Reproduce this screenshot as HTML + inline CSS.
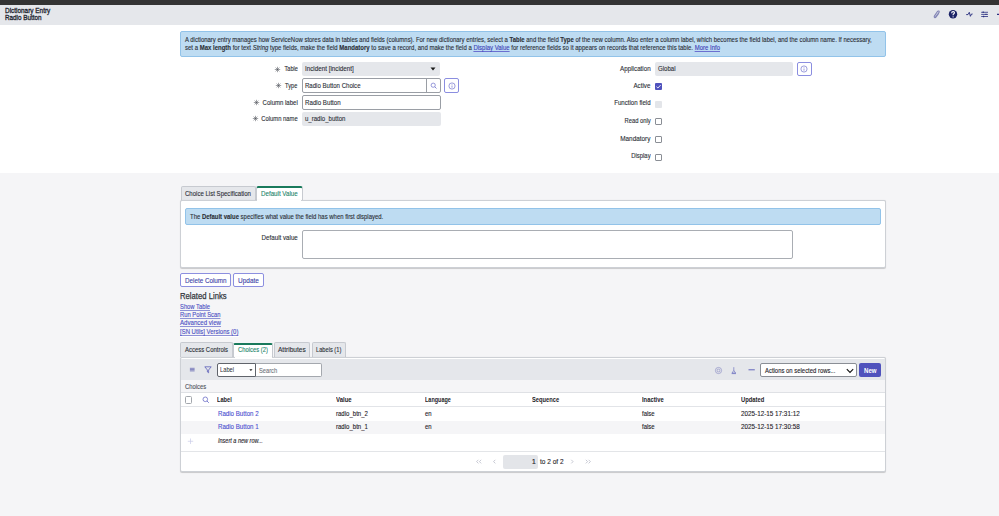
<!DOCTYPE html>
<html><head><meta charset="utf-8"><style>
html,body{margin:0;padding:0;width:999px;height:516px;overflow:hidden;background:#fff;position:relative}
body{font-family:"Liberation Sans",sans-serif}
.t{position:absolute;white-space:nowrap;line-height:1;-webkit-text-stroke:0.12px currentColor}
.r{position:absolute}
.lk{color:#3d41b8;text-decoration-thickness:0.6px;text-decoration-color:#6b6fd0}
b{font-weight:bold}
</style></head><body>
<div class="r" style="left:0px;top:0px;width:999px;height:5px;background:#343434"></div>
<div class="r" style="left:0px;top:5px;width:999px;height:20px;background:#e5e7eb"></div>
<div class="r" style="left:0px;top:173px;width:999px;height:343px;background:#f5f5f7"></div>
<div class="t " id="t0" style="left:4.50px;top:6.67px;font-size:7.0px;color:#1e2530;-webkit-text-stroke:0.3px #1e2530;transform:scaleX(0.9169);transform-origin:left center;">Dictionary Entry</div>
<div class="t " id="t1" style="left:4.50px;top:13.67px;font-size:7.0px;color:#1e2530;-webkit-text-stroke:0.3px #1e2530;transform:scaleX(0.9041);transform-origin:left center;">Radio Button</div>
<svg class="r" style="left:930px;top:8px" width="70" height="14" viewBox="0 0 70 14">
 <path d="M5.3 9.4 L8.9 4.7 Q9.6 3.6 8.8 3.1 Q8 2.7 7.3 3.7 L4.5 7.9 Q3.8 9.1 4.6 9.6 Q5.4 10 6.1 9 L8.5 5.7" fill="none" stroke="#8386b6" stroke-width="1.15" stroke-linecap="round"/>
 <circle cx="23" cy="6.3" r="4.2" fill="#1b2367"/>
 <path d="M21.6 5.2 Q21.7 3.6 23.1 3.6 Q24.5 3.7 24.4 4.9 Q24.3 5.7 23.2 6.3 L23.1 7.2" fill="none" stroke="#fff" stroke-width="1.1"/>
 <circle cx="23.1" cy="8.8" r="0.65" fill="#fff"/>
 <path d="M36.2 6.6 L38 6.6 L39.3 4.3 L40.4 8.3 L41.5 6 L42.6 6" fill="none" stroke="#2a3080" stroke-width="0.95" stroke-linejoin="round"/>
 <path d="M51.2 4.3 H58 M51.2 6.4 H58 M51.2 8.5 H58" stroke="#2a3080" stroke-width="0.8"/>
 <path d="M53.2 3.6 V5 M56 5.7 V7.1 M53.6 7.8 V9.2" stroke="#2a3080" stroke-width="1.1"/>
 <path d="M67 6.3 H70" stroke="#2a3080" stroke-width="1.2"/>
</svg>
<div class="r" style="left:180px;top:31px;width:706px;height:25.6px;background:#bedcf2;border:1px solid #92c3e9;border-radius:2px;box-sizing:border-box"></div>
<div class="t " id="t2" style="left:185.00px;top:35.57px;font-size:7.0px;color:#2b2f36;transform:scaleX(0.8502);transform-origin:left center;">A dictionary entry manages how ServiceNow stores data in tables and fields (columns). For new dictionary entries, select a <b>Table</b> and the field <b>Type</b> of the new column. Also enter a column label, which becomes the field label, and the column name. If necessary,</div>
<div class="t " id="t3" style="left:185.00px;top:44.07px;font-size:7.0px;color:#2b2f36;transform:scaleX(0.8568);transform-origin:left center;">set a <b>Max length</b> for text <i>String</i> type fields, make the field <b>Mandatory</b> to save a record, and make the field a <u class="lk">Display Value</u> for reference fields so it appears on records that reference this table. <u class="lk">More Info</u></div>
<div class="t " id="t4" style="right:701.40px;top:65.45px;font-size:7.5px;color:#2b2f36;transform:scaleX(0.7470);transform-origin:right center;">Table</div>
<svg class="r" style="left:274.20px;top:66.00px" width="7" height="7" viewBox="0 0 7 7"><path d="M3.5 0.8 V6.2 M0.8 3.5 H6.2 M1.6 1.6 L5.4 5.4 M5.4 1.6 L1.6 5.4" stroke="#50545c" stroke-width="0.55"/></svg>
<div class="t " id="t5" style="right:701.40px;top:81.65px;font-size:7.5px;color:#2b2f36;transform:scaleX(0.7500);transform-origin:right center;">Type</div>
<svg class="r" style="left:275.20px;top:82.20px" width="7" height="7" viewBox="0 0 7 7"><path d="M3.5 0.8 V6.2 M0.8 3.5 H6.2 M1.6 1.6 L5.4 5.4 M5.4 1.6 L1.6 5.4" stroke="#50545c" stroke-width="0.55"/></svg>
<div class="t " id="t6" style="right:701.40px;top:98.55px;font-size:7.5px;color:#2b2f36;transform:scaleX(0.8040);transform-origin:right center;">Column label</div>
<svg class="r" style="left:253.40px;top:99.10px" width="7" height="7" viewBox="0 0 7 7"><path d="M3.5 0.8 V6.2 M0.8 3.5 H6.2 M1.6 1.6 L5.4 5.4 M5.4 1.6 L1.6 5.4" stroke="#50545c" stroke-width="0.55"/></svg>
<div class="t " id="t7" style="right:701.40px;top:114.85px;font-size:7.5px;color:#2b2f36;transform:scaleX(0.7794);transform-origin:right center;">Column name</div>
<svg class="r" style="left:251.70px;top:115.40px" width="7" height="7" viewBox="0 0 7 7"><path d="M3.5 0.8 V6.2 M0.8 3.5 H6.2 M1.6 1.6 L5.4 5.4 M5.4 1.6 L1.6 5.4" stroke="#50545c" stroke-width="0.55"/></svg>
<div class="r" style="left:302px;top:62px;width:138px;height:14px;background:#e5e7eb;border-radius:2px"></div>
<div class="t " id="t8" style="left:305.30px;top:64.95px;font-size:7.5px;color:#2b2f36;transform:scaleX(0.8343);transform-origin:left center;">Incident [incident]</div>
<svg class="r" style="left:430px;top:67px" width="6" height="4"><path d="M0.5 0.5 L5.5 0.5 L3 3.5Z" fill="#1a1a1a"/></svg>
<div class="r" style="left:302px;top:78px;width:139px;height:14.599999999999994px;background:#fff;border:1px solid #9a9ea5;border-radius:2px;box-sizing:border-box"></div>
<div class="r" style="left:426px;top:78px;width:1px;height:14.599999999999994px;background:#9a9ea5"></div>
<div class="t " id="t9" style="left:305.30px;top:81.75px;font-size:7.5px;color:#2b2f36;transform:scaleX(0.8067);transform-origin:left center;">Radio Button Choice</div>
<svg class="r" style="left:429.5px;top:82px" width="8" height="8" viewBox="0 0 8 8"><circle cx="3.2" cy="3.2" r="2.1" fill="none" stroke="#7376cc" stroke-width="0.75"/><path d="M4.8 4.8 L6.5 6.5" stroke="#7376cc" stroke-width="0.85"/></svg>
<div class="r" style="left:444.4px;top:78.3px;width:14.200000000000045px;height:14.299999999999997px;background:#fff;border:1px solid #8b8ee0;border-radius:2px;box-sizing:border-box"></div>
<svg class="r" style="left:447.5px;top:81.5px" width="8" height="8" viewBox="0 0 8 8"><circle cx="4" cy="4" r="3.1" fill="none" stroke="#5a5dc4" stroke-width="0.6"/><path d="M4 3.5 V5.7" stroke="#5a5dc4" stroke-width="0.6"/><circle cx="4" cy="2.4" r="0.38" fill="#5a5dc4"/></svg>
<div class="r" style="left:302px;top:95.2px;width:139px;height:14.399999999999991px;background:#fff;border:1px solid #9a9ea5;border-radius:2px;box-sizing:border-box"></div>
<div class="t " id="t10" style="left:305.30px;top:98.55px;font-size:7.5px;color:#2b2f36;transform:scaleX(0.8231);transform-origin:left center;">Radio Button</div>
<div class="r" style="left:302px;top:112.2px;width:138.5px;height:13.599999999999994px;background:#e5e7eb;border-radius:2px"></div>
<div class="t " id="t11" style="left:305.30px;top:115.15px;font-size:7.5px;color:#2b2f36;transform:scaleX(0.8072);transform-origin:left center;">u_radio_button</div>
<div class="r" style="left:655px;top:62px;width:138px;height:14px;background:#e5e7eb;border-radius:2px"></div>
<div class="t " id="t12" style="left:658.20px;top:64.95px;font-size:7.5px;color:#2b2f36;transform:scaleX(0.8069);transform-origin:left center;">Global</div>
<div class="r" style="left:797px;top:62px;width:14.600000000000023px;height:14px;background:#fff;border:1px solid #8b8ee0;border-radius:2px;box-sizing:border-box"></div>
<svg class="r" style="left:800.3px;top:65px" width="8" height="8" viewBox="0 0 8 8"><circle cx="4" cy="4" r="3.1" fill="none" stroke="#5a5dc4" stroke-width="0.6"/><path d="M4 3.5 V5.7" stroke="#5a5dc4" stroke-width="0.6"/><circle cx="4" cy="2.4" r="0.38" fill="#5a5dc4"/></svg>
<div class="t " id="t13" style="right:348.60px;top:64.95px;font-size:7.5px;color:#2b2f36;transform:scaleX(0.8337);transform-origin:right center;">Application</div>
<div class="t " id="t14" style="right:348.60px;top:81.65px;font-size:7.5px;color:#2b2f36;transform:scaleX(0.8318);transform-origin:right center;">Active</div>
<div class="t " id="t15" style="right:348.60px;top:99.25px;font-size:7.5px;color:#2b2f36;transform:scaleX(0.8160);transform-origin:right center;">Function field</div>
<div class="t " id="t16" style="right:348.60px;top:117.05px;font-size:7.5px;color:#2b2f36;transform:scaleX(0.7785);transform-origin:right center;">Read only</div>
<div class="t " id="t17" style="right:348.60px;top:134.55px;font-size:7.5px;color:#2b2f36;transform:scaleX(0.8522);transform-origin:right center;">Mandatory</div>
<div class="t " id="t18" style="right:348.60px;top:152.35px;font-size:7.5px;color:#2b2f36;transform:scaleX(0.7888);transform-origin:right center;">Display</div>
<div class="r" style="left:655px;top:82.9px;width:7px;height:7.0px;background:#4f52bd;border-radius:1px"><svg width="7" height="7" viewBox="0 0 7 7" style="display:block"><path d="M1.5 3.7 L2.9 5 L5.6 2.1" fill="none" stroke="#fff" stroke-width="0.9"/></svg></div>
<div class="r" style="left:655px;top:100.5px;width:7px;height:7.0px;background:#e3e5e9;border-radius:1px"></div>
<div class="r" style="left:655px;top:118.4px;width:7px;height:7.0px;background:#fff;border:1px solid #8a8e95;border-radius:1px;box-sizing:border-box"></div>
<div class="r" style="left:655px;top:136px;width:7px;height:7px;background:#fff;border:1px solid #8a8e95;border-radius:1px;box-sizing:border-box"></div>
<div class="r" style="left:655px;top:153.8px;width:7px;height:7.0px;background:#fff;border:1px solid #8a8e95;border-radius:1px;box-sizing:border-box"></div>
<div class="r" style="left:180.5px;top:185.5px;width:75.30000000000001px;height:15.5px;background:#e5e7eb;border:1px solid #c7cad0;border-bottom:none;border-radius:2px 2px 0 0;box-sizing:border-box"></div>
<div class="t " id="t19" style="left:184.70px;top:189.95px;font-size:7.5px;color:#2b2f36;transform:scaleX(0.8064);transform-origin:left center;">Choice List Specification</div>
<div class="r" style="left:255.6px;top:185.8px;width:47.00000000000003px;height:15.699999999999989px;background:#fff;border:1px solid #c7cad0;border-bottom:none;border-top:2px solid #1a7a5c;border-radius:2.5px 2.5px 0 0;box-sizing:border-box"></div>
<div class="t " id="t20" style="left:260.80px;top:189.95px;font-size:7.5px;color:#23856b;transform:scaleX(0.8250);transform-origin:left center;">Default Value</div>
<div class="r" style="left:180px;top:200px;width:706px;height:68.39999999999998px;background:#fff;border:1px solid #cdd0d5;border-radius:2px;box-shadow:0 0.6px 0.8px rgba(0,0,0,0.18);box-sizing:border-box"></div>
<div class="r" style="left:256.6px;top:199.5px;width:44.39999999999998px;height:1.6999999999999886px;background:#fff"></div>
<div class="r" style="left:185px;top:208px;width:696px;height:17.400000000000006px;background:#bedcf2;border:1px solid #92c3e9;border-radius:2px;box-sizing:border-box"></div>
<div class="t " id="t21" style="left:189.80px;top:212.77px;font-size:7.0px;color:#2b2f36;transform:scaleX(0.8502);transform-origin:left center;">The <b>Default value</b> specifies what value the field has when first displayed.</div>
<div class="t " id="t22" style="right:701.00px;top:234.25px;font-size:7.5px;color:#2b2f36;transform:scaleX(0.8268);transform-origin:right center;">Default value</div>
<div class="r" style="left:302px;top:230.1px;width:491px;height:28.50000000000003px;background:#fff;border:1px solid #a9adb3;border-radius:2px;box-sizing:border-box"></div>
<div class="r" style="left:180.2px;top:273.2px;width:50.60000000000002px;height:13.400000000000034px;background:#fff;border:1px solid #8c8fe0;border-radius:2px;box-sizing:border-box"></div>
<div class="t " id="t23" style="left:184.90px;top:276.95px;font-size:7.5px;color:#3b3fa8;transform:scaleX(0.8365);transform-origin:left center;">Delete Column</div>
<div class="r" style="left:233px;top:273.2px;width:30.600000000000023px;height:13.400000000000034px;background:#fff;border:1px solid #8c8fe0;border-radius:2px;box-sizing:border-box"></div>
<div class="t " id="t24" style="left:237.80px;top:276.95px;font-size:7.5px;color:#3b3fa8;transform:scaleX(0.8641);transform-origin:left center;">Update</div>
<div class="t " id="t25" style="left:180.00px;top:291.54px;font-size:8.7px;color:#33373d;-webkit-text-stroke:0.25px #33373d;transform:scaleX(0.8852);transform-origin:left center;">Related Links</div>
<div class="t " id="t26" style="left:180.00px;top:303.51px;font-size:6.6px;color:#4a4fc4;text-decoration:underline;text-decoration-color:#8e91d6;text-decoration-thickness:0.6px;transform:scaleX(0.8828);transform-origin:left center;">Show Table</div>
<div class="t " id="t27" style="left:180.00px;top:311.51px;font-size:6.6px;color:#4a4fc4;text-decoration:underline;text-decoration-color:#8e91d6;text-decoration-thickness:0.6px;transform:scaleX(0.8816);transform-origin:left center;">Run Point Scan</div>
<div class="t " id="t28" style="left:180.00px;top:319.51px;font-size:6.6px;color:#4a4fc4;text-decoration:underline;text-decoration-color:#8e91d6;text-decoration-thickness:0.6px;transform:scaleX(0.9243);transform-origin:left center;">Advanced view</div>
<div class="t " id="t29" style="left:180.00px;top:328.91px;font-size:6.6px;color:#4a4fc4;text-decoration:underline;text-decoration-color:#8e91d6;text-decoration-thickness:0.6px;transform:scaleX(0.9054);transform-origin:left center;">[SN Utils] Versions (0)</div>
<div class="r" style="left:180px;top:336px;width:58.5px;height:1.1999999999999886px;background:#fff"></div>
<div class="r" style="left:180.4px;top:342.4px;width:52.599999999999994px;height:14.900000000000034px;background:#e5e7eb;border:1px solid #c7cad0;border-bottom:none;border-radius:2px 2px 0 0;box-sizing:border-box"></div>
<div class="r" style="left:233.4px;top:343px;width:39.79999999999998px;height:15.300000000000011px;background:#fff;border:1px solid #c7cad0;border-bottom:none;border-top:2px solid #1a7a5c;border-radius:2px 2px 0 0;box-sizing:border-box"></div>
<div class="r" style="left:274px;top:342.4px;width:36px;height:14.900000000000034px;background:#e5e7eb;border:1px solid #c7cad0;border-bottom:none;border-radius:2px 2px 0 0;box-sizing:border-box"></div>
<div class="r" style="left:311.6px;top:342.4px;width:34.799999999999955px;height:14.900000000000034px;background:#e5e7eb;border:1px solid #c7cad0;border-bottom:none;border-radius:2px 2px 0 0;box-sizing:border-box"></div>
<div class="t " id="t30" style="left:184.90px;top:345.95px;font-size:7.5px;color:#2b2f36;transform:scaleX(0.7935);transform-origin:left center;">Access Controls</div>
<div class="t " id="t31" style="left:238.30px;top:345.95px;font-size:7.5px;color:#23856b;transform:scaleX(0.7795);transform-origin:left center;">Choices (2)</div>
<div class="t " id="t32" style="left:278.30px;top:345.95px;font-size:7.5px;color:#2b2f36;transform:scaleX(0.8742);transform-origin:left center;">Attributes</div>
<div class="t " id="t33" style="left:316.40px;top:345.95px;font-size:7.5px;color:#2b2f36;transform:scaleX(0.7584);transform-origin:left center;">Labels (1)</div>
<div class="r" style="left:180px;top:357px;width:706px;height:115.39999999999998px;background:#fff;border:1px solid #cdd0d5;border-radius:2px;box-shadow:0 0.6px 0.8px rgba(0,0,0,0.18);box-sizing:border-box"></div>
<div class="r" style="left:234.6px;top:356.5px;width:37.400000000000006px;height:1.5px;background:#fff"></div>
<div class="r" style="left:181px;top:358.6px;width:704px;height:21.0px;background:#e5e7eb"></div>
<div class="r" style="left:181px;top:379.6px;width:704px;height:13.399999999999977px;background:#f5f5f7;border-bottom:1px solid #dfe1e5;box-sizing:border-box"></div>
<div class="r" style="left:181px;top:406px;width:704px;height:1px;background:#e2e4e8"></div>
<div class="r" style="left:181px;top:420.6px;width:704px;height:13.399999999999977px;background:#f5f5f7"></div>
<div class="r" style="left:181px;top:451.2px;width:704px;height:1.0px;background:#e3e5e8"></div>
<svg class="r" style="left:189px;top:366px" width="7" height="7" viewBox="0 0 7 7"><path d="M0.9 2.3 H5.6 M0.9 3.6 H5.6 M0.9 4.9 H5.6" stroke="#5d60ad" stroke-width="0.75"/></svg>
<svg class="r" style="left:204px;top:366px" width="8" height="8" viewBox="0 0 8 8"><path d="M0.8 0.8 H7.2 L4.6 4 V6.8 L3.4 6 V4 Z" fill="none" stroke="#5a5db8" stroke-width="0.8" stroke-linejoin="round"/></svg>
<div class="r" style="left:217.4px;top:363.2px;width:38.599999999999994px;height:13.600000000000023px;background:#fff;border:1px solid #60646b;border-radius:2px 0 0 2px;box-sizing:border-box"></div>
<div class="t " id="t34" style="left:219.80px;top:366.35px;font-size:7.5px;color:#2a2e35;-webkit-text-stroke:0;transform:scaleX(0.7680);transform-origin:left center;">Label</div>
<svg class="r" style="left:249px;top:369.3px" width="4" height="3"><path d="M0.3 0.3 L3.5 0.3 L1.9 2.1Z" fill="#1a1a1a"/></svg>
<div class="r" style="left:255.6px;top:363.2px;width:66.00000000000003px;height:13.600000000000023px;background:#fff;border:1px solid #a4a8ae;border-left:none;border-radius:0 2px 2px 0;box-sizing:border-box"></div>
<div class="t " id="t35" style="left:258.60px;top:366.55px;font-size:7.5px;color:#70747b;transform:scaleX(0.7616);transform-origin:left center;">Search</div>
<svg class="r" style="left:714px;top:365.5px" width="9" height="9" viewBox="0 0 9 9"><circle cx="4.5" cy="4.5" r="3.1" fill="none" stroke="#8f92c6" stroke-width="0.7"/><circle cx="4.5" cy="4.5" r="1.4" fill="none" stroke="#8f92c6" stroke-width="0.7"/></svg>
<svg class="r" style="left:730px;top:365.5px" width="8" height="9" viewBox="0 0 8 9"><path d="M3.8 1.2 V4.4 L2 7 H5.6 L3.8 4.4" fill="none" stroke="#6f72c0" stroke-width="0.7" stroke-linejoin="round"/><path d="M1.6 7.6 H6" stroke="#6f72c0" stroke-width="0.8"/></svg>
<svg class="r" style="left:747.5px;top:366px" width="8" height="8"><path d="M0.5 3.8 H6.8" stroke="#5558b5" stroke-width="0.9"/></svg>
<div class="r" style="left:760.3px;top:363px;width:96.90000000000009px;height:14px;background:#fff;border:1px solid #8a8e95;border-radius:2px;box-sizing:border-box"></div>
<div class="t " id="t36" style="left:765.20px;top:366.55px;font-size:7.5px;color:#1e2228;transform:scaleX(0.7891);transform-origin:left center;">Actions on selected rows...</div>
<svg class="r" style="left:846px;top:367.5px" width="8" height="6" viewBox="0 0 8 6"><path d="M0.8 1.2 L4 4.4 L7.2 1.2" fill="none" stroke="#111" stroke-width="1.1"/></svg>
<div class="r" style="left:859.2px;top:363px;width:21.5px;height:14px;background:#4f52bd;border-radius:2px"></div>
<div class="t " id="t37" style="left:864.00px;top:366.55px;font-size:7.5px;color:#fff;font-weight:bold;-webkit-text-stroke:0;transform:scaleX(0.8105);transform-origin:left center;">New</div>
<div class="t " id="t38" style="left:184.90px;top:382.65px;font-size:7.5px;color:#50545b;transform:scaleX(0.7857);transform-origin:left center;">Choices</div>
<div class="r" style="left:185.3px;top:396.4px;width:7.199999999999989px;height:7.2000000000000455px;background:#fff;border:1px solid #a3a7ad;border-radius:1.5px;box-sizing:border-box"></div>
<svg class="r" style="left:202px;top:396px" width="8" height="8" viewBox="0 0 8 8"><circle cx="3.3" cy="3.3" r="2.3" fill="none" stroke="#6d70c8" stroke-width="0.8"/><path d="M5 5 L6.8 6.8" stroke="#6d70c8" stroke-width="0.9"/></svg>
<div class="t " id="t39" style="left:217.40px;top:395.85px;font-size:7.5px;color:#1e2228;font-weight:bold;-webkit-text-stroke:0;transform:scaleX(0.7553);transform-origin:left center;">Label</div>
<div class="t " id="t40" style="left:335.80px;top:395.85px;font-size:7.5px;color:#1e2228;font-weight:bold;-webkit-text-stroke:0;transform:scaleX(0.8006);transform-origin:left center;">Value</div>
<div class="t " id="t41" style="left:424.50px;top:395.85px;font-size:7.5px;color:#1e2228;font-weight:bold;-webkit-text-stroke:0;transform:scaleX(0.7284);transform-origin:left center;">Language</div>
<div class="t " id="t42" style="left:532.20px;top:395.85px;font-size:7.5px;color:#1e2228;font-weight:bold;-webkit-text-stroke:0;transform:scaleX(0.7647);transform-origin:left center;">Sequence</div>
<div class="t " id="t43" style="left:641.50px;top:395.85px;font-size:7.5px;color:#1e2228;font-weight:bold;-webkit-text-stroke:0;transform:scaleX(0.7767);transform-origin:left center;">Inactive</div>
<div class="t " id="t44" style="left:741.00px;top:395.85px;font-size:7.5px;color:#1e2228;font-weight:bold;-webkit-text-stroke:0;transform:scaleX(0.7733);transform-origin:left center;">Updated</div>
<div class="t " id="t45" style="left:217.90px;top:409.85px;font-size:7.5px;color:#4a4fd0;transform:scaleX(0.8181);transform-origin:left center;">Radio Button 2</div>
<div class="t " id="t46" style="left:335.90px;top:409.85px;font-size:7.5px;color:#1e2228;transform:scaleX(0.8050);transform-origin:left center;">radio_btn_2</div>
<div class="t " id="t47" style="left:425.00px;top:409.85px;font-size:7.5px;color:#1e2228;transform:scaleX(0.7910);transform-origin:left center;">en</div>
<div class="t " id="t48" style="left:642.00px;top:409.85px;font-size:7.5px;color:#1e2228;transform:scaleX(0.7953);transform-origin:left center;">false</div>
<div class="t " id="t49" style="left:741.00px;top:409.85px;font-size:7.5px;color:#1e2228;transform:scaleX(0.8427);transform-origin:left center;">2025-12-15 17:31:12</div>
<div class="t " id="t50" style="left:217.90px;top:423.35px;font-size:7.5px;color:#4a4fd0;transform:scaleX(0.8181);transform-origin:left center;">Radio Button 1</div>
<div class="t " id="t51" style="left:335.90px;top:423.35px;font-size:7.5px;color:#1e2228;transform:scaleX(0.8050);transform-origin:left center;">radio_btn_1</div>
<div class="t " id="t52" style="left:425.00px;top:423.35px;font-size:7.5px;color:#1e2228;transform:scaleX(0.7910);transform-origin:left center;">en</div>
<div class="t " id="t53" style="left:642.00px;top:423.35px;font-size:7.5px;color:#1e2228;transform:scaleX(0.7953);transform-origin:left center;">false</div>
<div class="t " id="t54" style="left:741.00px;top:423.35px;font-size:7.5px;color:#1e2228;transform:scaleX(0.8427);transform-origin:left center;">2025-12-15 17:30:58</div>
<svg class="r" style="left:187px;top:437.5px" width="7" height="7"><path d="M3.5 0.5 V6 M0.8 3.3 H6.2" stroke="#c9cbe8" stroke-width="0.7"/></svg>
<div class="t " id="t55" style="left:218.20px;top:436.65px;font-size:7.5px;color:#1e2228;font-style:italic;transform:scaleX(0.7359);transform-origin:left center;">Insert a new row...</div>
<div class="r" style="left:503.1px;top:454.7px;width:34.89999999999998px;height:14.100000000000023px;background:#e3e5e9;border-radius:2px"></div>
<div class="t " id="t56" style="left:531.70px;top:458.05px;font-size:7.5px;color:#1e2228;">1</div>
<div class="t " id="t57" style="left:539.70px;top:458.05px;font-size:7.5px;color:#1e2228;transform:scaleX(0.8669);transform-origin:left center;">to 2 of 2</div>
<svg class="r" style="left:474.5px;top:458px" width="120" height="7" viewBox="0 0 120 7"><path d="M3.4 1.8 L1.6 3.6 L3.4 5.4 M6.2 1.8 L4.4 3.6 L6.2 5.4" fill="none" stroke="#b4b7c4" stroke-width="0.75"/><path d="M20.3 1.8 L18.6 3.6 L20.3 5.4" fill="none" stroke="#b4b7c4" stroke-width="0.75"/><path d="M96.3 1.8 L98 3.6 L96.3 5.4" fill="none" stroke="#b4b7c4" stroke-width="0.75"/><path d="M110.8 1.8 L112.6 3.6 L110.8 5.4 M113.6 1.8 L115.4 3.6 L113.6 5.4" fill="none" stroke="#b4b7c4" stroke-width="0.75"/></svg>
</body></html>
